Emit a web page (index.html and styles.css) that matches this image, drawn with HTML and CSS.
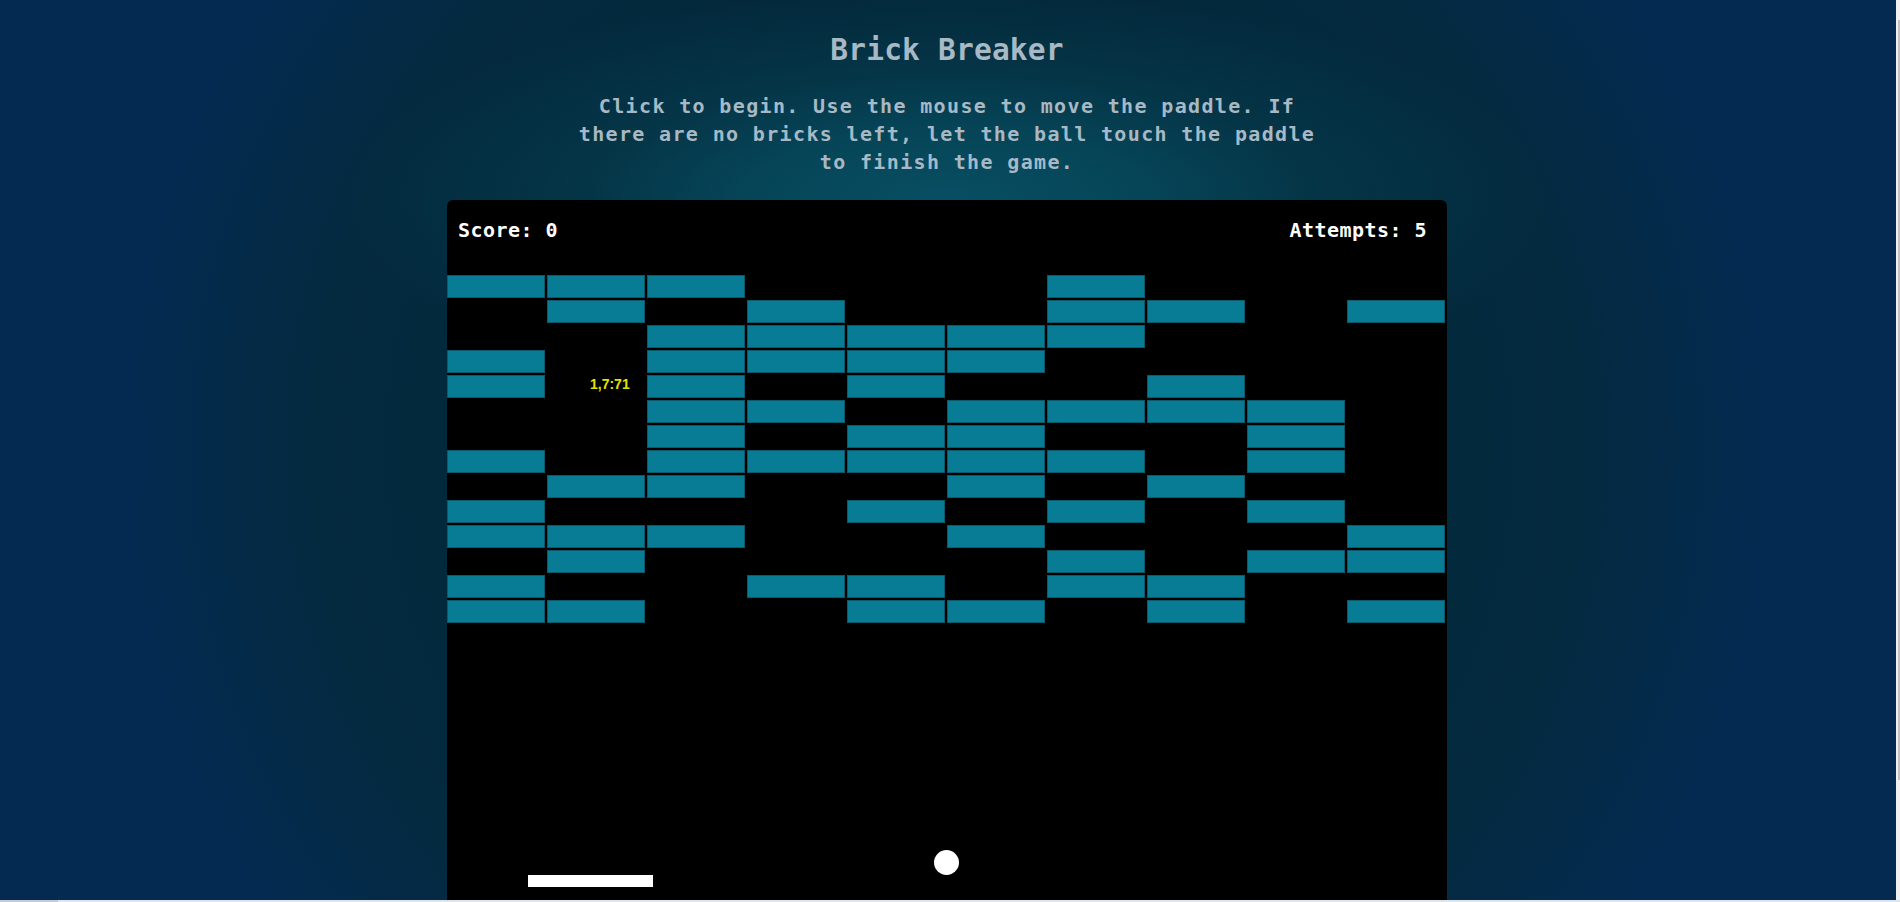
FILE: index.html
```html
<!DOCTYPE html>
<html lang="en">
<head>
<meta charset="utf-8">
<title>Brick Breaker</title>
<link rel="stylesheet" href="styles.css">
</head>
<body>
<div class="page">
  <main class="main">
    <h1 class="title">Brick Breaker</h1>
    <p class="intro">Click to begin. Use the mouse to move the paddle. If there are no bricks left, let the ball touch the paddle to finish the game.</p>
    <div class="board">
      <div class="hud">
        <span class="hud-item">Score: 0</span>
        <span class="hud-item">Attempts: 5</span>
      </div>
      <div class="bricks">
        <!-- row 0 -->
        <span class="brick"></span><span class="brick"></span><span class="brick"></span><span class="cell"></span><span class="cell"></span><span class="cell"></span><span class="brick"></span><span class="cell"></span><span class="cell"></span><span class="cell"></span>
        <!-- row 1 -->
        <span class="cell"></span><span class="brick"></span><span class="cell"></span><span class="brick"></span><span class="cell"></span><span class="cell"></span><span class="brick"></span><span class="brick"></span><span class="cell"></span><span class="brick"></span>
        <!-- row 2 -->
        <span class="cell"></span><span class="cell"></span><span class="brick"></span><span class="brick"></span><span class="brick"></span><span class="brick"></span><span class="brick"></span><span class="cell"></span><span class="cell"></span><span class="cell"></span>
        <!-- row 3 -->
        <span class="brick"></span><span class="cell"></span><span class="brick"></span><span class="brick"></span><span class="brick"></span><span class="brick"></span><span class="cell"></span><span class="cell"></span><span class="cell"></span><span class="cell"></span>
        <!-- row 4 -->
        <span class="brick"></span><span class="cell"></span><span class="brick"></span><span class="cell"></span><span class="brick"></span><span class="cell"></span><span class="cell"></span><span class="brick"></span><span class="cell"></span><span class="cell"></span>
        <!-- row 5 -->
        <span class="cell"></span><span class="cell"></span><span class="brick"></span><span class="brick"></span><span class="cell"></span><span class="brick"></span><span class="brick"></span><span class="brick"></span><span class="brick"></span><span class="cell"></span>
        <!-- row 6 -->
        <span class="cell"></span><span class="cell"></span><span class="brick"></span><span class="cell"></span><span class="brick"></span><span class="brick"></span><span class="cell"></span><span class="cell"></span><span class="brick"></span><span class="cell"></span>
        <!-- row 7 -->
        <span class="brick"></span><span class="cell"></span><span class="brick"></span><span class="brick"></span><span class="brick"></span><span class="brick"></span><span class="brick"></span><span class="cell"></span><span class="brick"></span><span class="cell"></span>
        <!-- row 8 -->
        <span class="cell"></span><span class="brick"></span><span class="brick"></span><span class="cell"></span><span class="cell"></span><span class="brick"></span><span class="cell"></span><span class="brick"></span><span class="cell"></span><span class="cell"></span>
        <!-- row 9 -->
        <span class="brick"></span><span class="cell"></span><span class="cell"></span><span class="cell"></span><span class="brick"></span><span class="cell"></span><span class="brick"></span><span class="cell"></span><span class="brick"></span><span class="cell"></span>
        <!-- row 10 -->
        <span class="brick"></span><span class="brick"></span><span class="brick"></span><span class="cell"></span><span class="cell"></span><span class="brick"></span><span class="cell"></span><span class="cell"></span><span class="cell"></span><span class="brick"></span>
        <!-- row 11 -->
        <span class="cell"></span><span class="brick"></span><span class="cell"></span><span class="cell"></span><span class="cell"></span><span class="cell"></span><span class="brick"></span><span class="cell"></span><span class="brick"></span><span class="brick"></span>
        <!-- row 12 -->
        <span class="brick"></span><span class="cell"></span><span class="cell"></span><span class="brick"></span><span class="brick"></span><span class="cell"></span><span class="brick"></span><span class="brick"></span><span class="cell"></span><span class="cell"></span>
        <!-- row 13 -->
        <span class="brick"></span><span class="brick"></span><span class="cell"></span><span class="cell"></span><span class="brick"></span><span class="brick"></span><span class="cell"></span><span class="brick"></span><span class="cell"></span><span class="brick"></span>
      </div>
      <span class="debug">1,7:71</span>
      <span class="ball"></span>
      <span class="paddle"></span>
    </div>
  </main>
  <div class="vscroll"><span class="vthumb"></span></div>
</div>
<div class="hscroll"><span class="hthumb"></span></div>
</body>
</html>
```

FILE: styles.css
```css
html, body {
  margin: 0;
  padding: 0;
  height: 902px;
  overflow: hidden;
}

body {
  font-family: "DejaVu Sans Mono", "Liberation Mono", monospace;
  background:
    radial-gradient(ellipse 650px 230px at 947px 200px,
      rgba(8, 78, 98, 1) 0%,
      rgba(6, 69, 88, 1) 30%,
      rgba(5, 58, 76, 0.75) 55%,
      rgba(3, 40, 58, 0) 92%),
    radial-gradient(ellipse 900px 900px at 947px 450px,
      #03283a 0%,
      #03283a 45%,
      #042a40 70%,
      #052a52 92%);
  background-color: #052a52;
}

.page {
  display: flex;
  height: 900px;
}

.main {
  flex: 1;
  display: flex;
  flex-direction: column;
  align-items: center;
  padding-right: 2px;
  overflow: hidden;
}

.title {
  margin: 32px 0 0;
  font-size: 29.5px;
  line-height: 36px;
  font-weight: bold;
  letter-spacing: 0.2px;
  color: #a7b9c4;
}

.intro {
  margin: 23.5px 0 0;
  max-width: 750px;
  text-align: center;
  font-size: 20px;
  line-height: 28px;
  font-weight: bold;
  letter-spacing: 1.35px;
  color: #a7b9c4;
}

.board {
  position: relative;
  flex: none;
  margin-top: 24px;
  width: 1000px;
  height: 702px;
  background: #000;
  border-radius: 6px 6px 0 0;
  overflow: hidden;
}

.hud {
  display: flex;
  justify-content: space-between;
  height: 75px;
  box-sizing: border-box;
  padding: 18px 20px 0 11px;
}

.hud-item {
  font-size: 20px;
  line-height: 24px;
  font-weight: bold;
  letter-spacing: 0.45px;
  color: #fff;
}

.bricks {
  display: grid;
  grid-template-columns: repeat(10, 100px);
  grid-template-rows: repeat(14, 25px);
}

.brick {
  width: 98px;
  height: 23px;
  box-sizing: border-box;
  background: #087c95;
  border: 1px solid #0a5a6b;
}

.debug {
  position: absolute;
  left: 143px;
  top: 177px;
  font-family: "Liberation Sans", Arial, sans-serif;
  font-size: 14px;
  line-height: 14px;
  font-weight: bold;
  color: #e2e200;
}

.ball {
  position: absolute;
  left: 487px;
  top: 650px;
  width: 25px;
  height: 25px;
  border-radius: 50%;
  background: #fff;
}

.paddle {
  position: absolute;
  left: 81px;
  top: 675px;
  width: 125px;
  height: 12px;
  background: #fff;
}

.vscroll {
  flex: none;
  width: 4px;
  background: #f1f1f1;
  display: flex;
  justify-content: flex-end;
  padding-top: 20px;
  box-sizing: border-box;
}

.vthumb {
  width: 2px;
  height: 760px;
  background: #c1c1c1;
}

.hscroll {
  height: 2px;
  background: #dde4eb;
  display: flex;
}

.hthumb {
  width: 58px;
  background: #c3cbd5;
}
```
